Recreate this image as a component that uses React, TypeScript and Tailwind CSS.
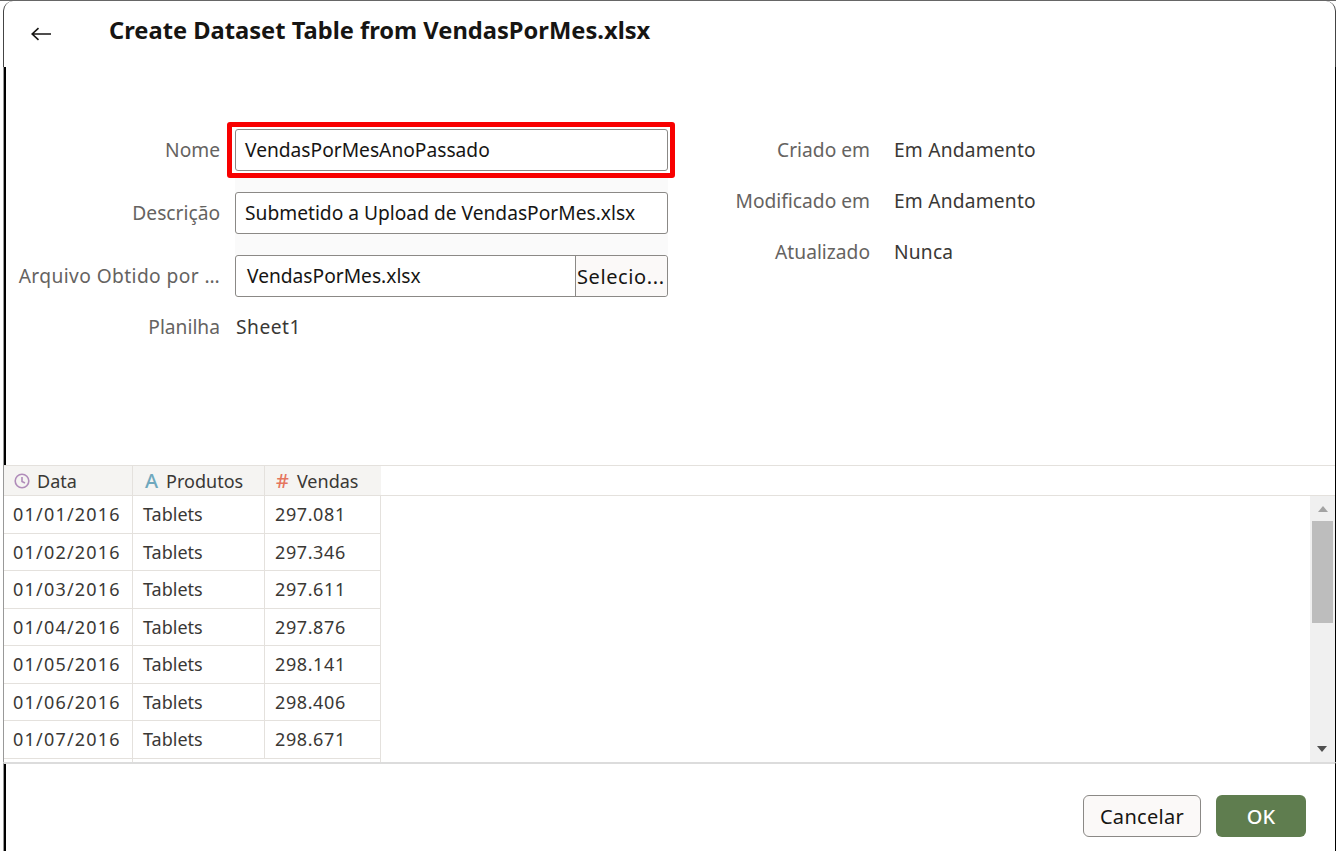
const rows = [
  ['01/01/2016', 'Tablets', '297.081'],
  ['01/02/2016', 'Tablets', '297.346'],
  ['01/03/2016', 'Tablets', '297.611'],
  ['01/04/2016', 'Tablets', '297.876'],
  ['01/05/2016', 'Tablets', '298.141'],
  ['01/06/2016', 'Tablets', '298.406'],
  ['01/07/2016', 'Tablets', '298.671'],
]

function Label({ text, wide }: { text: string; wide?: boolean }) {
  return (
    <div className={`flex h-[42px] w-[229px] shrink-0 items-center justify-end whitespace-nowrap pr-[15px] text-[#656361] ${wide ? 'tracking-[0.4px]' : ''}`}>
      {text}
    </div>
  )
}

function Meta({ label, value }: { label: string; value: string }) {
  return (
    <div className="flex h-[51px] items-center">
      <div className="w-[194px] whitespace-nowrap text-right text-[#656361]">{label}</div>
      <div className="pl-[24px] tracking-[0.2px] text-[#3a3835]">{value}</div>
    </div>
  )
}

export default function App() {
  return (
    <div className="flex h-[851px] w-[1336px] flex-col overflow-hidden border-t border-[#666] bg-white font-['Noto_Sans',sans-serif] text-[19.2px] text-[#161513]">
      <header className="ml-[3px] flex h-[66px] shrink-0 items-center rounded-t-[10px] border-x border-[#444] pb-[7px] pl-[27px]">
        <svg width="20" height="14" viewBox="0 0 20 14" fill="none" stroke="#161513" strokeWidth="1.6" className="mt-[6px]">
          <path d="M1 7h19M7.5 1.2 1.2 7l6.3 5.8" />
        </svg>
        <h1 className="ml-[58px] text-[23.7px] font-bold">Create Dataset Table from VendasPorMes.xlsx</h1>
      </header>

      <main className="ml-[3px] h-[398px] shrink-0 border-x border-l-[#999] border-r-black">
        <div className="flex h-full border-l-2 border-black">
          <div className="w-[670px] shrink-0 pt-[55px]">
            <div className="flex h-[56px] items-center">
              <Label text="Nome" />
              <div className="-ml-[8px] rounded-[3px] border-[5px] border-[#f80000] py-[2px] pr-[2px] pl-[3px]">
                <div className="flex h-[42px] w-[433px] items-center rounded-[3px] border border-[#8b8986] px-[9px]">VendasPorMesAnoPassado</div>
              </div>
            </div>
            <div className="flex">
              <div className="pt-[14px]">
                <Label text="Descrição" />
              </div>
              <div className="bg-[#fafafa] pt-[14px] pb-[21px]">
                <div className="flex h-[42px] w-[433px] items-center rounded-[3px] border border-[#8b8986] bg-white px-[9px] whitespace-nowrap">Submetido a Upload de VendasPorMes.xlsx</div>
              </div>
            </div>
            <div className="flex">
              <Label text="Arquivo Obtido por …" wide />
              <div className="flex h-[42px] w-[433px] items-center rounded-[3px] border border-[#8b8986]">
                <div className="w-[339px] pt-[1px] pl-[11px]">VendasPorMes.xlsx</div>
                <div className="flex h-full flex-1 items-center rounded-r-[3px] border-l border-[#8b8986] bg-[#fbf9f8] pt-[1px] pl-[1px] text-[20px] tracking-[0.6px] whitespace-nowrap">Selecio...</div>
              </div>
            </div>
            <div className="mt-[15px] flex h-[30px] items-center">
              <Label text="Planilha" />
              <div className="pl-[1px] tracking-[0.5px] text-[#3a3835]">Sheet1</div>
            </div>
          </div>
          <div className="pt-[58px]">
            <Meta label="Criado em" value="Em Andamento" />
            <Meta label="Modificado em" value="Em Andamento" />
            <Meta label="Atualizado" value="Nunca" />
          </div>
        </div>
      </main>

      <section className="ml-[3px] flex h-[297px] shrink-0 flex-col border-x border-l-[#999] border-r-black text-[18px]">
        <div className="flex h-[31px] shrink-0 border-y border-[#e4e1dd] text-[#3a3835]">
          <div className="flex w-[129px] items-center gap-[7px] border-r border-[#e4e1dd] bg-[#f5f4f2] pt-[1px] pl-[10px]">
            <svg width="16" height="16" viewBox="0 0 16 16" fill="none" stroke="#b08cba" strokeWidth="1.6">
              <circle cx="8" cy="8" r="6.8" />
              <path d="M8 4v4.5l3 1.5" />
            </svg>
            Data
          </div>
          <div className="flex w-[132px] items-center gap-[8px] border-r border-[#e4e1dd] bg-[#f5f4f2] pt-[1px] pl-[12px]">
            <span className="text-[20px] font-medium text-[#6fa8bd]">A</span>
            Produtos
          </div>
          <div className="flex w-[116px] items-center gap-[8px] bg-[#f5f4f2] pt-[1px] pl-[11px]">
            <span className="text-[20px] font-medium text-[#e5765f]">#</span>
            Vendas
          </div>
        </div>
        <div className="flex min-h-0 flex-1">
          <div className="min-w-0 flex-1 overflow-hidden pt-[0.25px]">
            {rows.map((r) => (
              <div key={r[0]} className="flex h-[37.5px] w-[377px] items-center border-b border-[#e4e1dd] text-[#3a3835]">
                <div className="flex h-full w-[129px] items-center border-r border-[#e4e1dd] pl-[9px] tracking-[1.2px]">{r[0]}</div>
                <div className="flex h-full w-[132px] items-center border-r border-[#e4e1dd] pl-[10px]">{r[1]}</div>
                <div className="flex h-full w-[116px] items-center border-r border-[#e4e1dd] pl-[10px] tracking-[0.6px]">{r[2]}</div>
              </div>
            ))}
            <div className="ml-[128px] h-[5px] w-[249px] border-x border-[#e4e1dd]" />
          </div>
          <div className="relative w-[25px] shrink-0 bg-[#f0f0f0]">
            <div className="mx-auto mt-[10px] h-0 w-0 border-x-[5.5px] border-b-[6px] border-x-transparent border-b-[#a3a3a3]" />
            <div className="mx-auto mt-[9px] h-[102px] w-[21px] bg-[#bdbdbd]" />
            <div className="absolute bottom-[10px] left-[7px] h-0 w-0 border-x-[5.5px] border-t-[6px] border-x-transparent border-t-[#505050]" />
          </div>
        </div>
      </section>

      <footer className="ml-[3px] min-h-0 flex-1 border-x border-t-2 border-t-[#dcdcdc] border-r-black border-l-[#999]">
        <div className="flex h-full items-start justify-end gap-[15px] border-l-2 border-black pt-[31px] pr-[29px]">
          <button className="h-[42px] w-[118px] rounded-[6px] border border-[#8b8986] bg-[#fbf9f8] pt-[1px] text-[20px] tracking-[0.3px] text-[#161513]">Cancelar</button>
          <button className="h-[42px] w-[90px] rounded-[6px] bg-[#5f7d4f] pt-[1px] text-[20px] font-medium text-white">OK</button>
        </div>
      </footer>
    </div>
  )
}
